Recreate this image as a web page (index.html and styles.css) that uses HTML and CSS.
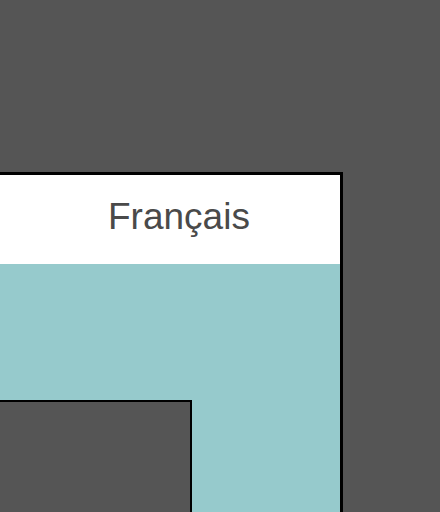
FILE: index.html
```html
<!DOCTYPE html>
<html>
<head>
<meta charset="utf-8">
<link rel="stylesheet" href="styles.css">
</head>
<body>
<div class="stage">
  <div class="panel">
    <div class="header"><span class="lang">Français</span></div>
    <div class="content">
      <div class="inner"></div>
    </div>
  </div>
</div>
</body>
</html>
```
FILE: styles.css
```css
html, body {
  margin: 0;
  padding: 0;
  background: #555555;
}
.stage {
  padding-top: 172px;
}
.panel {
  width: 340px;
  border-right: 3px solid #000;
  display: flex;
  flex-direction: column;
}
.header {
  height: 89px;
  border-top: 3px solid #000;
  background: #ffffff;
  padding-left: 108px;
}
.lang {
  display: block;
  font-family: "Liberation Sans", Arial, sans-serif;
  font-size: 37px;
  line-height: 42px;
  padding-top: 21px;
  color: #4a4a4a;
}
.content {
  background: #96cacc;
  padding-top: 136px;
}
.inner {
  width: 190px;
  height: 110px;
  background: #555555;
  border-top: 2px solid #000;
  border-right: 2px solid #000;
}
```
